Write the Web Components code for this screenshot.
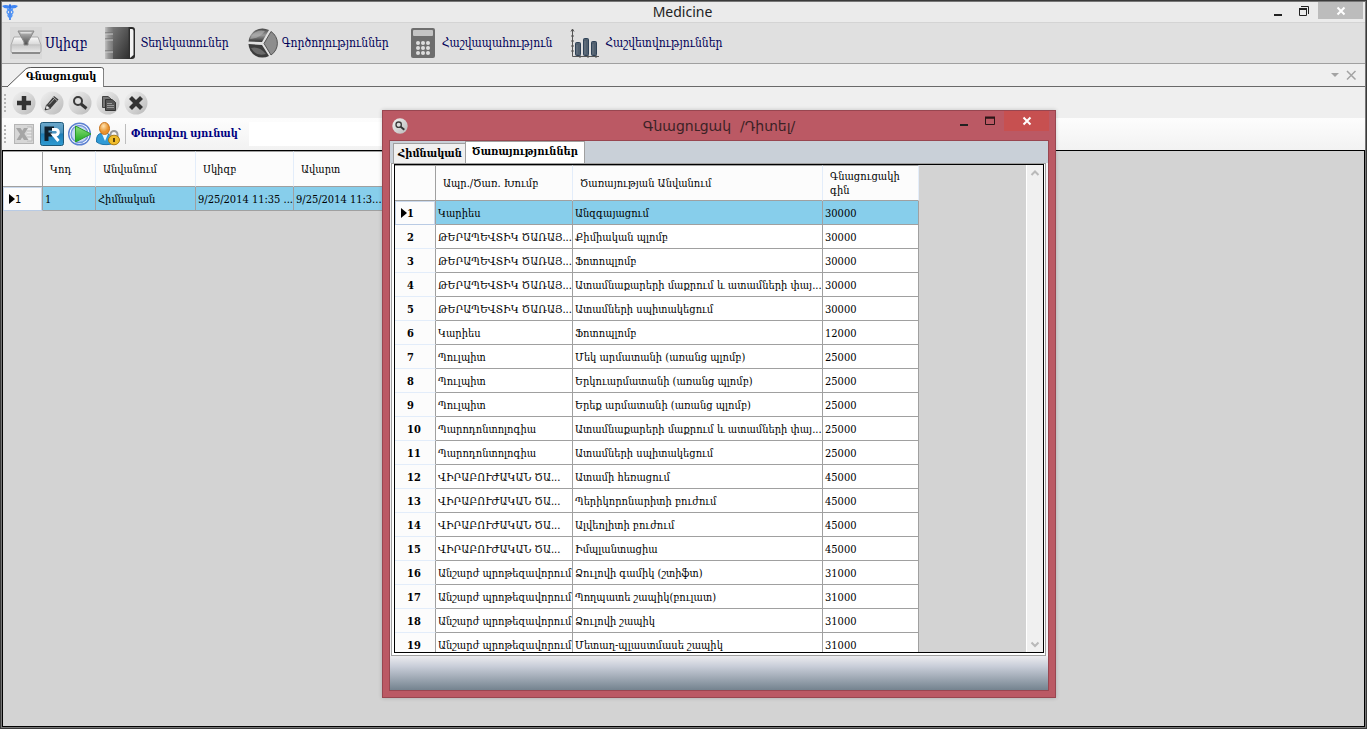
<!DOCTYPE html>
<html lang="hy">
<head>
<meta charset="utf-8">
<title>Medicine</title>
<style>
  body {
    margin: 0;
    font: 11px/14px 'DejaVu Serif Condensed', 'DejaVu Serif', serif;
    color: #000;
  }
</style>
</head>
<body>
<main-window></main-window>

<script>
const disc = `
  <defs><linearGradient id="d" x1="0" y1="0" x2="1" y2="1">
    <stop offset="0" stop-color="#f2f2f2"/><stop offset="1" stop-color="#b9b9b9"/>
  </linearGradient></defs>
  <circle cx="12" cy="12" r="11.5" fill="url(#d)"/>`

const icons = {
  caduceus: ['0 0 16 16', `
    <path d="M0 2 Q4 0 8 2.500 Q12 0 16 2 Q14 5 9 4.500 H7 Q2 5 0 2Z" fill="#3f86f5"/>
    <path d="M8 2V16" stroke="#2f6fe0" stroke-width="1.500"/>
    <path d="M5 5Q11 6 11 8T6 11Q6 13 9 14M11 5Q5 6 5 8T10 11Q10 13 7 14" stroke="#4d93f7" fill="none" stroke-width="1.300"/>
    <circle cx="8" cy="1.500" r="1.200" fill="#2f6fe0"/>`],
  inbox: ['0 0 32 32', `
    <defs>
      <linearGradient id="a" x2="0" y2="1"><stop stop-color="#fafafa"/><stop offset=".6" stop-color="#cfcfcf"/><stop offset="1" stop-color="#ececec"/></linearGradient>
      <linearGradient id="b" x2="0" y2="1"><stop stop-color="#bfbfbf"/><stop offset="1" stop-color="#4c4c4c"/></linearGradient>
    </defs>
    <path d="M0 0H32V32H0Z" fill="#d9d9d9"/>
    <path d="M4 10H28L31 18V24Q31 26 29 26H3Q1 26 1 24V18Z" fill="url(#a)" stroke="#aaa"/>
    <path d="M1 18H31" stroke="#bbb"/>
    <path d="M2 26H30" stroke="#8b8b8b" stroke-width="2"/>
    <path d="M8 4H24L18 15V18H14V15Z" fill="url(#b)" stroke="#8a8a8a"/>
    <path d="M10 5H22L21 6.500H11Z" fill="#ddd"/>`],
  book: ['0 0 32 32', `
    <defs><linearGradient id="a"><stop stop-color="#c2c2c2"/><stop offset=".4" stop-color="#999"/><stop offset="1" stop-color="#777"/></linearGradient>
      <linearGradient id="b" y2="1"><stop stop-color="#777"/><stop offset="1" stop-color="#2e2e2e"/></linearGradient></defs>
    <path d="M1 0H27Q30 0 30 3V29Q30 32 27 32H1Z" fill="#2b2b2b"/>
    <path d="M0 0H8V32H0Z" fill="url(#a)"/>
    <path d="M0 6H8M0 12H8M0 24H8" stroke="#686868"/><path d="M0 7H8M0 13H8M0 25H8" stroke="#ccc"/>
    <path d="M8 0H24V32H8Z" fill="url(#b)"/>
    <path d="M25 2H27Q28.500 2 28.500 4V28L25 31Z" fill="#f2f2f2"/>
    <path d="M24 0V32" stroke="#333"/>`],
  pie: ['0 0 32 32', `
    <defs><linearGradient id="a" x2="0" y2="1"><stop stop-color="#444"/><stop offset=".5" stop-color="#999"/><stop offset="1" stop-color="#333"/></linearGradient></defs>
    <path d="M15 15L1.500 14.500A14 14 0 0 1 22 3Z" fill="url(#a)"/>
    <path d="M15 18L1.500 17A14 14 0 0 0 22 29Z" fill="#3c3c3c"/>
    <path d="M17 16.500L24 4.500A14 14 0 0 1 24 28Z" fill="#8d8d8d" stroke="#555"/>
    <path d="M3 12A12 12 0 0 1 18 4Q13 11 3 12Z" fill="#b5b5b5" opacity=".6"/>
    <path d="M4 21Q12 19 19 27Q9 30 4 21Z" fill="#888" opacity=".6"/>`],
  calculator: ['0 0 32 32', `
    <rect x="4" y="1" width="24" height="30" rx="2" fill="#6e6e6e"/>
    <rect x="6" y="3" width="20" height="6" rx="1" fill="#c4c4c4"/>
    <g fill="#dedede">
      <circle cx="11" cy="16" r="2"/><circle cx="16" cy="16" r="2"/><circle cx="21" cy="16" r="2"/>
      <circle cx="11" cy="21" r="2"/><circle cx="16" cy="21" r="2"/><circle cx="21" cy="21" r="2"/>
      <circle cx="11" cy="26" r="2"/><circle cx="16" cy="26" r="2"/><circle cx="21" cy="26" r="2"/>
    </g>`],
  chart: ['0 0 32 32', `
    <path d="M2.500 2V29.500H29M1 4.500L2.500 2L4 4.500M1 9H4M1 14H4M1 19H4M1 24H4M10 28V31M18 28V31M26 28V31" stroke="#555" fill="none"/>
    <g fill="#51606f" stroke="#2f4257">
      <rect x="5.500" y="15.500" width="5" height="13" rx="1"/>
      <rect x="13.500" y="11.500" width="5" height="17" rx="1"/>
      <rect x="21.500" y="14.500" width="5" height="14" rx="1"/>
    </g>
    <path d="M7 18V27M15 14V27M23 17V27" stroke="#6c7986"/>`],
  add: ['0 0 24 24', disc + `<path d="M12 5V19M5 12H19" stroke="#333" stroke-width="4.500"/>`],
  edit: ['0 0 24 24', disc + `
    <path d="M5 19L6.500 14L14 5L18.500 8.500L10.500 17.500Z" fill="#3c3c3c"/>
    <path d="M5 19L6.500 14L10.500 17.500Z" fill="#eee" stroke="#444" stroke-width=".8"/>
    <path d="M5 19L5.500 17L7 18.200Z" fill="#222"/>
    <path d="M9 13.500L15 7M13 6L17.500 10" stroke="#aaa"/>`],
  view: ['0 0 24 24', disc + `
    <circle cx="10" cy="10" r="4" fill="#ddd" stroke="#3a3a3a" stroke-width="2"/>
    <path d="M13 13L18.500 17.500" stroke="#333" stroke-width="3"/>`],
  copy: ['0 0 24 24', disc + `
    <path d="M6.500 5.500H12L15 8V16.500H6.500Z" fill="#777" stroke="#444"/>
    <path d="M9.500 8.500H16L19.500 11.500V19.500H9.500Z" fill="#555" stroke="#333"/>
    <path d="M11 12.500H16M11 14.500H18M11 16.500H18" stroke="#999"/>`],
  remove: ['0 0 24 24', disc + `<path d="M6.500 6.500L17.500 17.500M17.500 6.500L6.500 17.500" stroke="#333" stroke-width="4.200"/>`],
  excel: ['0 0 24 24', `
    <rect x="2.500" y="2.500" width="19" height="19" fill="#d6d6d6" stroke="#b5b5b5"/>
    <path d="M15 5H20V19H15M15 9H20M15 12H20M15 15H20" fill="#e6e6e6" stroke="#b9b9b9"/>
    <path d="M4 6H8.500L16.500 18H12ZM12 6H16L8.500 18H4.500Z" fill="#a5a5a5"/>`],
  report: ['0 0 24 24', `
    <defs><linearGradient id="a" x2="0" y2="1"><stop stop-color="#6ea9cb"/><stop offset=".45" stop-color="#4a93bf"/><stop offset=".5" stop-color="#1f7db5"/><stop offset="1" stop-color="#2f9bd2"/></linearGradient></defs>
    <rect x=".5" y=".5" width="23" height="23" rx="2" fill="url(#a)" stroke="#1e5878"/>
    <path d="M6.500 19V6.500H14M6.500 12.500H12" fill="none" stroke="#10202c" stroke-width="4"/>
    <path d="M12 7.500H16A2.800 2.800 0 0 1 16 13H13.500L18.500 19" fill="none" stroke="#fff" stroke-width="3"/>`],
  play: ['0 0 24 24', `
    <defs><linearGradient id="a" x2="0" y2="1"><stop stop-color="#8fe27d"/><stop offset="1" stop-color="#1ca81f"/></linearGradient></defs>
    <circle cx="11.500" cy="12" r="10.800" fill="#fff" stroke="#5a7fd0" stroke-width="1.400"/>
    <circle cx="11.500" cy="12" r="8.500" fill="#c9d8f3" stroke="#7596dc" stroke-width="1.400"/>
    <path d="M7.500 4L23 12L7.500 20Z" fill="url(#a)" stroke="#2c9a2c"/>`],
  user: ['0 0 24 24', `
    <defs><radialGradient id="a" cx=".4" cy=".3"><stop stop-color="#ffe3b0"/><stop offset="1" stop-color="#e8922c"/></radialGradient></defs>
    <path d="M0.500 20Q0 11 6 11.500H11Q16 12 15.500 22Q6 24 .5 20Z" fill="#2f9ad6" stroke="#1e74aa"/>
    <path d="M6 12L9 19L12 12Z" fill="#eaf6ff"/>
    <ellipse cx="8.500" cy="6.500" rx="5" ry="6" fill="url(#a)" stroke="#c8731c"/>
    <path d="M14.500 16V12.500A3.500 3.500 0 0 1 21.500 12.500V16" fill="none" stroke="#9a9a9a" stroke-width="2"/>
    <ellipse cx="18" cy="18" rx="5.500" ry="4.800" fill="#f0bd2c" stroke="#a97a12"/>
    <path d="M18 16V20" stroke="#5c430a" stroke-width="2"/>`],
  minimize: ['0 0 12 12', `<path d="M2 10H10" stroke="#222" stroke-width="2"/>`],
  restore: ['0 0 12 12', `<path d="M1.500 4H8.500V10.500H1.500Z" fill="none" stroke="#222"/><path d="M1 4H9" stroke="#222" stroke-width="2"/><path d="M3 1.500H10.500V9" fill="none" stroke="#222"/>`],
  maximize: ['0 0 12 12', `<path d="M1.500 3H10.500V9.500H1.500Z" fill="none" stroke="#2b1517"/><path d="M1 2.500H11" stroke="#2b1517" stroke-width="2"/>`],
  cross: ['0 0 12 12', `<path d="M2.500 2.500L9.500 9.500M9.500 2.500L2.500 9.500" stroke="currentColor" stroke-width="2"/>`],
  'thin-cross': ['0 0 12 12', `<path d="M2 2L10.500 10.500M10.500 2L2 10.500" stroke="currentColor" stroke-width="1.500"/>`],
  down: ['0 0 12 12', `<path d="M2 4H10L6 8Z" fill="currentColor"/>`],
  'chevron-up': ['0 0 12 12', `<path d="M2.500 8L6 4.500L9.500 8" fill="none" stroke="#b9b9b9" stroke-width="2"/>`],
  'chevron-down': ['0 0 12 12', `<path d="M2.500 4.500L6 8L9.500 4.500" fill="none" stroke="#b9b9b9" stroke-width="2"/>`],
}

class UiIcon extends HTMLElement {
  connectedCallback() {
    const [viewBox, body] = icons[this.getAttribute('name')]
    const size = this.getAttribute('size') || 24
    this.attachShadow({ mode: 'open' }).innerHTML = `
      <style>
        :host { display: block; flex: none; }
        svg { display: block; }
      </style>
      <svg width="${size}" height="${size}" viewBox="${viewBox}" aria-hidden="true">${body}</svg>
    `
  }
}
customElements.define('ui-icon', UiIcon)

// Title bar shared by the main window and the dialog
class TitleBar extends HTMLElement {
  connectedCallback() {
    this.attachShadow({ mode: 'open' }).innerHTML = `
      <style>
        :host {
          display: grid;
          grid-template-columns: 1fr auto 1fr;
          align-items: center;
        }
        h1 { margin: 0; font: inherit; white-space: pre; }
        .buttons { display: flex; justify-content: flex-end; align-self: start; }
        button {
          width: 26px;
          height: var(--button-height, 18px);
          padding: 0;
          border: 0;
          background: none;
          display: flex;
          align-items: center;
          justify-content: center;
        }
        .close { width: 45px; margin-left: 1px; background: var(--close, #bcbcbc); color: #fff; }
      </style>
      <slot name="icon"></slot>
      <h1><slot></slot></h1>
      <div class="buttons">
        <button aria-label="Minimize"><ui-icon name="minimize" size="12"></ui-icon></button>
        <button aria-label="Restore"><ui-icon name="${this.getAttribute('resize')}" size="12"></ui-icon></button>
        <button class="close" aria-label="Close"><ui-icon name="cross" size="12"></ui-icon></button>
      </div>
    `
  }
}
customElements.define('title-bar', TitleBar)

class MenuItem extends HTMLElement {
  connectedCallback() {
    this.attachShadow({ mode: 'open' }).innerHTML = `
      <style>
        :host { display: block; }
        button {
          display: flex;
          align-items: center;
          gap: 3px;
          padding: 0;
          border: 0;
          background: none;
          font: inherit;
          color: #000058;
          white-space: nowrap;
        }
      </style>
      <button><ui-icon name="${this.getAttribute('icon')}" size="32"></ui-icon><slot></slot></button>
    `
  }
}
customElements.define('menu-item', MenuItem)

class ToolButton extends HTMLElement {
  connectedCallback() {
    this.attachShadow({ mode: 'open' }).innerHTML = `
      <style>
        :host { display: block; }
        button { display: block; padding: 0; border: 0; background: none; }
      </style>
      <button aria-label="${this.getAttribute('icon')}"><ui-icon name="${this.getAttribute('icon')}"></ui-icon></button>
    `
  }
}
customElements.define('tool-button', ToolButton)

class ToolBar extends HTMLElement {
  connectedCallback() {
    this.attachShadow({ mode: 'open' }).innerHTML = `
      <style>
        :host {
          display: flex;
          align-items: center;
          gap: 4px;
          height: 31px;
          padding-left: 2px;
        }
        .grip {
          width: 2px;
          height: 18px;
          margin-right: 2px;
          background: repeating-linear-gradient(#b4b4b4 0 2px, transparent 2px 4px);
        }
      </style>
      <span class="grip"></span>
      <slot></slot>
    `
  }
}
customElements.define('tool-bar', ToolBar)

const sources = {
  lists: {
    widths: [40, 53, 100, 98, 98],
    columns: ['Կոդ', 'Անվանում', 'Սկիզբ', 'Ավարտ'],
    rows: [['1', 'Հիմնական', '9/25/2014 11:35 ...', '9/25/2014 11:3...']],
  },
  services: {
    widths: [41, 137, 250, 96],
    columns: ['Ապր./Ծառ. Խումբ', 'Ծառայության Անվանում', 'Գնացուցակի<br>գին'],
    rows: [
      ['Կարիես', 'Անզգայացում', '30000'],
      ['ԹԵՐԱՊԵՎՏԻԿ ԾԱՌԱՅ...', 'Քիմիական պլոմբ', '30000'],
      ['ԹԵՐԱՊԵՎՏԻԿ ԾԱՌԱՅ...', 'Ֆոտոպլոմբ', '30000'],
      ['ԹԵՐԱՊԵՎՏԻԿ ԾԱՌԱՅ...', 'Ատամնաքարերի մաքրում և ատամների փայ...', '30000'],
      ['ԹԵՐԱՊԵՎՏԻԿ ԾԱՌԱՅ...', 'Ատամների սպիտակեցում', '30000'],
      ['Կարիես', 'Ֆոտոպլոմբ', '12000'],
      ['Պուլպիտ', 'Մեկ արմատանի (առանց պլոմբ)', '25000'],
      ['Պուլպիտ', 'Երկուարմատանի (առանց պլոմբ)', '25000'],
      ['Պուլպիտ', 'Երեք արմատանի (առանց պլոմբ)', '25000'],
      ['Պարոդոնտոլոգիա', 'Ատամնաքարերի մաքրում և ատամների փայ...', '25000'],
      ['Պարոդոնտոլոգիա', 'Ատամների սպիտակեցում', '25000'],
      ['ՎԻՐԱԲՈՒԺԱԿԱՆ ԾԱ...', 'Ատամի հեռացում', '45000'],
      ['ՎԻՐԱԲՈՒԺԱԿԱՆ ԾԱ...', 'Պերիկորոնարիտի բուժում', '45000'],
      ['ՎԻՐԱԲՈՒԺԱԿԱՆ ԾԱ...', 'Ալվեոլիտի բուժում', '45000'],
      ['ՎԻՐԱԲՈՒԺԱԿԱՆ ԾԱ...', 'Իմպլանտացիա', '45000'],
      ['Անշարժ պրոթեզավորում', 'Ձուլովի գամիկ (շտիֆտ)', '31000'],
      ['Անշարժ պրոթեզավորում', 'Պողպատե շապիկ(բուլատ)', '31000'],
      ['Անշարժ պրոթեզավորում', 'Ձուլովի շապիկ', '31000'],
      ['Անշարժ պրոթեզավորում', 'Մետաղ-պլաստմասե շապիկ', '31000'],
    ],
  },
}

class DataGrid extends HTMLElement {
  connectedCallback() {
    const { widths, columns, rows } = sources[this.getAttribute('source')]
    const total = widths.reduce((a, b) => a + b)
    this.attachShadow({ mode: 'open' }).innerHTML = `
      <style>
        :host {
          display: flex;
          align-items: stretch;
          overflow: hidden;
          box-sizing: border-box;
          border: 1px solid #000;
          background: #d3d3d3;
        }
        .view { flex: 1; min-width: 0; overflow: hidden; }
        table { width: ${total}px; table-layout: fixed; border-collapse: separate; border-spacing: 0; }
        th, td {
          box-sizing: border-box;
          height: 24px;
          padding: 2px 0 0 2px;
          overflow: hidden;
          white-space: nowrap;
          text-align: left;
          border-right: 1px solid #a0a0a0;
          border-bottom: 1px solid #a0a0a0;
        }
        td { background: #fff; }
        thead th {
          height: 36px;
          padding-left: 7px;
          font-weight: normal;
          background: #fcfcfc;
          border-top: 1px solid #a0a0a0;
          border-right-color: #e3edfa;
        }
        thead td { background: #fcfcfc; border-top: 1px solid #a0a0a0; }
        tbody th {
          padding-left: 12px;
          font-weight: var(--row-weight, bold);
          font-family: var(--row-font, inherit);
          background: #fcfcfc;
          border-bottom-color: #e3edfa;
        }
        .current td { background: #87ceeb; }
        .current th { padding-left: 6px; border-bottom-color: #b9cbe4; box-shadow: inset 1px 1px #c9d8ec, inset -1px 0 #c9d8ec; }
        .current svg { vertical-align: -1px; }
        .scroll {
          display: flex;
          flex-direction: column;
          justify-content: space-between;
          background: #f0f0f0;
          border-left: 1px solid #fff;
        }
        .scroll button { padding: 2px; border: 0; background: none; }
      </style>
      <div class="view">
        <table>
          <colgroup>${widths.map(w => `<col style="width:${w}px">`).join('')}</colgroup>
          <thead><tr><td></td>${columns.map(c => `<th scope="col">${c}</th>`).join('')}</tr></thead>
          <tbody>
            ${rows.map((row, i) => `
              <tr class="${i ? '' : 'current'}">
                <th scope="row">${i ? '' : '<svg width="6" height="10"><path d="M0 0L6 5L0 10Z"/></svg>'}${i + 1}</th>
                ${row.map(c => `<td>${c}</td>`).join('')}
              </tr>`).join('')}
          </tbody>
        </table>
      </div>
      ${this.hasAttribute('scrollbar') ? `
        <div class="scroll">
          <button aria-label="Scroll up"><ui-icon name="chevron-up" size="12"></ui-icon></button>
          <button aria-label="Scroll down"><ui-icon name="chevron-down" size="12"></ui-icon></button>
        </div>` : ''}
    `
  }
}
customElements.define('data-grid', DataGrid)

class PriceDialog extends HTMLElement {
  connectedCallback() {
    this.attachShadow({ mode: 'open' }).innerHTML = `
      <style>
        :host {
          display: flex;
          flex-direction: column;
          box-sizing: border-box;
          padding: 0 6px 6px;
          border: 1px solid #984650;
          background: #bb5964;
          box-shadow: 0 0 4px #0003;
        }
        title-bar {
          height: 29px;
          font: 14px/20px 'DejaVu Sans', sans-serif;
          color: #3b2226;
          --close: #c75050;
          --button-height: 20px;
        }
        title-bar ui-icon { margin-left: 3px; }
        .body {
          flex: 1;
          min-height: 0;
          display: flex;
          flex-direction: column;
          border: 1px solid #984650;
          background: #f4f4f6;
        }
        .tabs {
          display: flex;
          align-items: flex-end;
          height: 22px;
          padding: 0 3px;
          background: #c9d0d8;
        }
        .tabs button {
          box-sizing: border-box;
          height: 20px;
          padding: 1px 3px 0 4px;
          border: 1px solid #a0a0a0;
          border-width: 1px 0 0 1px;
          background: #f0f0f0;
          font: inherit;
          font-weight: bold;
          color: #000;
        }
        .tabs [aria-selected=true] { height: 22px; padding: 0 6px 2px; border-right-width: 1px; background: #fff; }
        .page {
          flex: 1;
          min-height: 0;
          display: flex;
          margin: 0 2px 0 1px;
          padding: 0 1px 2px 2px;
          border: 1px solid #a0a0a0;
          background: #fff;
        }
        data-grid { flex: 1; min-width: 0; }
        footer { height: 34px; background: linear-gradient(#ececef, #c9ced9 30%, #74838f); }
      </style>
      <title-bar resize="maximize"><ui-icon slot="icon" name="view" size="16"></ui-icon>Գնացուցակ  /Դիտել/</title-bar>
      <div class="body">
        <div class="tabs" role="tablist">
          <button role="tab" aria-selected="false">Հիմնական</button>
          <button role="tab" aria-selected="true">Ծառայություններ</button>
        </div>
        <div class="page" role="tabpanel"><data-grid source="services" scrollbar></data-grid></div>
        <footer></footer>
      </div>
    `
  }
}
customElements.define('price-dialog', PriceDialog)

class MainWindow extends HTMLElement {
  connectedCallback() {
    this.attachShadow({ mode: 'open' }).innerHTML = `
      <style>
        :host {
          display: flex;
          flex-direction: column;
          box-sizing: border-box;
          height: 100vh;
          padding: 0 1px 1px;
          border: 1px solid #3a3a3a;
          background: #efefef;
          box-shadow: inset 0 0 0 1px #777;
        }
        title-bar {
          height: 20px;
          padding: 0 2px 0 0;
          border-bottom: 1px solid #d4d4d4;
          background: #ebebeb;
          border-top: 1px solid #777;
          font: 14px/20px 'Noto Sans', sans-serif;
          color: #222;
          --button-height: 17px;
        }
        nav {
          display: flex;
          align-items: center;
          gap: 18px;
          height: 40px;
          padding-left: 8px;
          border-bottom: 1px solid #a0a0a0;
          background: #e0e0e0;
          font-size: 12px;
        }
        nav .start { font-size: 14px; }
        .tabs {
          display: flex;
          align-items: flex-end;
          justify-content: space-between;
          height: 22px;
          padding: 0 8px 0 5px;
          border-bottom: 1px solid #696969;
        }
        .tab {
          position: relative;
          height: 20px;
          margin-bottom: -1px;
          padding: 0 8px 0 19px;
          border: 0;
          background: none;
          font: inherit;
          font-weight: bold;
          color: #000;
        }
        .tab svg { position: absolute; inset: 0; width: 100%; height: 100%; }
        .tab span { position: relative; }
        .tools { display: flex; gap: 4px; align-self: center; color: #a3a3a3; }
        .tools button { padding: 0; border: 0; background: none; color: inherit; }
        .search { height: 32px; background: linear-gradient(#fdfdfd, #f2f2f2); }
        .divider { width: 1px; height: 20px; margin: 0 1px; background: #bdbdbd; }
        label { margin-right: 4px; font-weight: bold; color: #000080; white-space: nowrap; }
        input { width: 200px; height: 24px; box-sizing: border-box; border: 0; background: #fff; }
        data-grid { flex: 1; min-height: 0; --row-weight: normal; --row-font: 'DejaVu Sans Condensed', sans-serif; }
        price-dialog { position: absolute; inset: 110px 311px 31px 382px; }
      </style>
      <title-bar resize="restore"><ui-icon slot="icon" name="caduceus" size="16"></ui-icon>Medicine</title-bar>
      <nav>
        <menu-item class="start" icon="inbox">Սկիզբ</menu-item>
        <menu-item icon="book">Տեղեկատուներ</menu-item>
        <menu-item icon="pie">Գործողություններ</menu-item>
        <menu-item icon="calculator">Հաշվապահություն</menu-item>
        <menu-item icon="chart">Հաշվետվություններ</menu-item>
      </nav>
      <div class="tabs">
        <button class="tab">
          <svg viewBox="0 0 98 20" preserveAspectRatio="none"><path d="M0 20L19 2Q21 .5 24 .5H95Q97.500 .5 97.500 3V20" fill="#fff" stroke="#555"/></svg>
          <span>Գնացուցակ</span>
        </button>
        <div class="tools">
          <button aria-label="Tab list"><ui-icon name="down" size="12"></ui-icon></button>
          <button aria-label="Close tab"><ui-icon name="thin-cross" size="12"></ui-icon></button>
        </div>
      </div>
      <tool-bar>
        <tool-button icon="add"></tool-button>
        <tool-button icon="edit"></tool-button>
        <tool-button icon="view"></tool-button>
        <tool-button icon="copy"></tool-button>
        <tool-button icon="remove"></tool-button>
      </tool-bar>
      <tool-bar class="search">
        <tool-button icon="excel"></tool-button>
        <tool-button icon="report"></tool-button>
        <tool-button icon="play"></tool-button>
        <tool-button icon="user"></tool-button>
        <span class="divider"></span>
        <label for="query">Փնտրվող սյունակ՝</label>
        <input id="query" type="text">
      </tool-bar>
      <data-grid source="lists"></data-grid>
      <price-dialog></price-dialog>
    `
  }
}
customElements.define('main-window', MainWindow)
</script>
</body>
</html>
